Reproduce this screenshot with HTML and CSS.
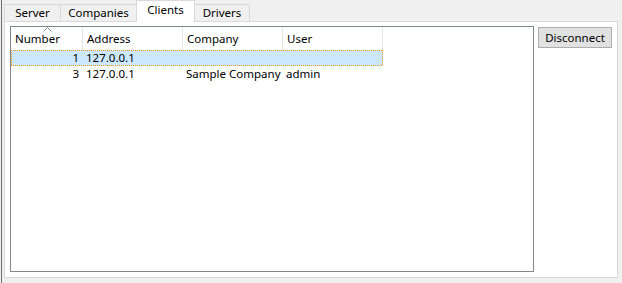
FILE: index.html
```html
<!DOCTYPE html>
<html lang="en">
<head>
    <meta charset="UTF-8">
    <title>Clients</title>
    <link rel="stylesheet" href="styles.css">
</head>
<body>
    <div class="window">
        <div class="tabs">
            <div class="tab tab-server">Server</div>
            <div class="tab tab-companies">Companies</div>
            <div class="tab tab-clients active">Clients</div>
            <div class="tab tab-drivers">Drivers</div>
        </div>

        <div class="panel">
            <div class="listview">
                <div class="lv-header">
                    <div class="lv-col sorted">
                        Number
                        <svg class="sort-arrow" width="9" height="5" viewBox="0 0 9 5">
                            <polyline points="0.5,4.5 4.5,0.5 8.5,4.5" fill="none" stroke="#8a8a8a" stroke-width="1"/>
                        </svg>
                    </div>
                    <div class="lv-col">Address</div>
                    <div class="lv-col">Company</div>
                    <div class="lv-col">User</div>
                </div>
                <div class="lv-row selected">
                    <div class="cell num">1</div>
                    <div class="cell">127.0.0.1</div>
                    <div class="cell"></div>
                    <div class="cell"></div>
                </div>
                <div class="lv-row">
                    <div class="cell num">3</div>
                    <div class="cell">127.0.0.1</div>
                    <div class="cell">Sample Company</div>
                    <div class="cell">admin</div>
                </div>
            </div>
            <button class="btn">Disconnect</button>
        </div>
    </div>
</body>
</html>
```

FILE: styles.css
```css
body {
    margin: 0;
    background: #f0f0f0;
    font-family: "Noto Sans", "Liberation Sans", sans-serif;
    font-size: 11.5px;
    color: #000;
    width: 622px;
    height: 283px;
    overflow: hidden;
}
.window {
    margin-left: 1px;
    border-left: 1px solid #6d6d6d;
    height: 283px;
    padding-left: 2px;
    box-sizing: border-box;
}

/* tab strip */
.tabs {
    display: flex;
    align-items: flex-end;
    height: 21px;
}
.tab {
    box-sizing: border-box;
    height: 17px;
    line-height: 16px;
    border: 1px solid #d9d9d9;
    border-bottom: none;
    background: #f0f0f0;
    text-align: center;
    margin-right: -1px;
}
.tab-server { width: 57px; }
.tab-companies { width: 77px; }
.tab-clients { width: 59px; }
.tab-drivers { width: 56px; }
.tab.active {
    height: 22px;
    margin-bottom: -1px;
    padding-top: 1px;
    background: #fff;
    position: relative;
    z-index: 1;
}

/* tab page */
.panel {
    box-sizing: border-box;
    width: 614px;
    height: 257px;
    border: 1px solid #d9d9d9;
    background: #fff;
    padding: 4px 5px 5px 5px;
    display: flex;
    align-items: flex-start;
}
.listview {
    box-sizing: border-box;
    width: 524px;
    height: 246px;
    border: 1px solid #828790;
    background: #fff;
}
.lv-header,
.lv-row {
    display: grid;
    grid-template-columns: 72px 100px 100px 100px;
    width: 372px;
}
.lv-col {
    box-sizing: border-box;
    height: 23px;
    padding: 4px 4px 0 4px;
    line-height: 16px;
    border-right: 1px solid #e5e5e5;
    white-space: nowrap;
}
.lv-col.sorted {
    position: relative;
}
.sort-arrow {
    position: absolute;
    top: 0;
    left: 32px;
}
.lv-row {
    height: 16px;
    line-height: 16px;
}
.cell {
    padding: 0 4px 0 3px;
    white-space: nowrap;
    overflow: hidden;
}
.cell.num {
    text-align: right;
    padding-right: 4px;
}
.lv-row.selected {
    background: #cce8ff;
    position: relative;
}
/* focus rectangle drawn over the selected row */
.lv-row.selected::after {
    content: "";
    position: absolute;
    inset: 0;
    pointer-events: none;
    background:
        repeating-linear-gradient(90deg, #f7931e 0 1px, transparent 1px 2px) top left / 100% 1px no-repeat,
        repeating-linear-gradient(90deg, #f7931e 0 1px, transparent 1px 2px) bottom left / 100% 1px no-repeat,
        repeating-linear-gradient(180deg, #f7931e 0 1px, transparent 1px 2px) top left / 1px 100% no-repeat,
        repeating-linear-gradient(180deg, #f7931e 0 1px, transparent 1px 2px) top right / 1px 100% no-repeat;
}

.btn {
    box-sizing: border-box;
    width: 74px;
    height: 21px;
    margin: 1px 0 0 4px;
    padding: 0;
    background: #e1e1e1;
    border: 1px solid #adadad;
    font-family: inherit;
    font-size: 11.5px;
    color: #000;
}
```
